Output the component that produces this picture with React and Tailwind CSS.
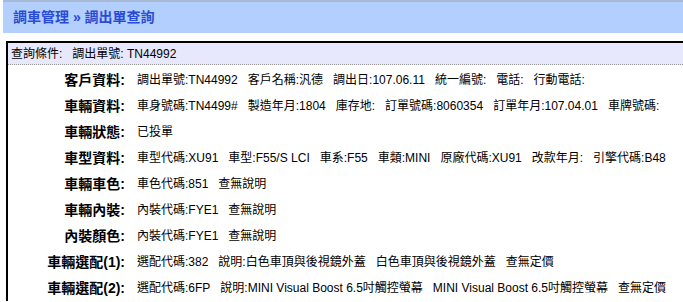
import React from "react";

const rows = [
  ["客戶資料:", ["調出單號:TN44992", "客戶名稱:汎德", "調出日:107.06.11", "統一編號:", "電話:", "行動電話:"]],
  ["車輛資料:", ["車身號碼:TN4499#", "製造年月:1804", "庫存地:", "訂單號碼:8060354", "訂單年月:107.04.01", "車牌號碼:"]],
  ["車輛狀態:", ["已投單"]],
  ["車型資料:", ["車型代碼:XU91", "車型:F55/S LCI", "車系:F55", "車類:MINI", "原廠代碼:XU91", "改款年月:", "引擎代碼:B48"]],
  ["車輛車色:", ["車色代碼:851", "查無說明"]],
  ["車輛內裝:", ["內裝代碼:FYE1", "查無說明"]],
  ["內裝顏色:", ["內裝代碼:FYE1", "查無說明"]],
  ["車輛選配(1):", ["選配代碼:382", "說明:白色車頂與後視鏡外蓋", "白色車頂與後視鏡外蓋", "查無定價"]],
  ["車輛選配(2):", ["選配代碼:6FP", "說明:MINI Visual Boost 6.5吋觸控螢幕", "MINI Visual Boost 6.5吋觸控螢幕", "查無定價"]],
];

export default function App() {
  return (
    <div
      className="w-[683px] h-[302px] overflow-hidden bg-white text-black"
      style={{ fontFamily: '"Liberation Sans", Arial, "Noto Sans CJK TC", sans-serif' }}
    >
      <div className="ml-[3px] h-[33px] border-t-2 border-[#a8b9d6] bg-[#b3cffe] flex items-center pl-[10px]">
        <span className="text-[14px] font-bold text-[#2a4bd6]">調車管理 » 調出單查詢</span>
      </div>

      <div className="mt-[8px] ml-[6px] border-l-2 border-t-2 border-black">
        <div className="h-[22px] bg-[#e8e8fc] border-b border-dotted border-[#999] flex items-center pl-[3px] text-[12px] whitespace-pre">
          查詢條件:   調出單號: TN44992
        </div>
        <div className="pt-[2px]">
          {rows.map(([label, values]) => (
            <div key={label} className="h-[26px] flex items-center">
              <div className="w-[117px] text-right text-[14px] font-bold">{label}</div>
              <div className="pl-[12px] text-[12px] flex whitespace-pre">
                {values.map((v, i) => (
                  <span key={i} className={i < values.length - 1 ? "mr-[10px]" : ""}>
                    {v}
                  </span>
                ))}
              </div>
            </div>
          ))}
        </div>
      </div>
    </div>
  );
}
